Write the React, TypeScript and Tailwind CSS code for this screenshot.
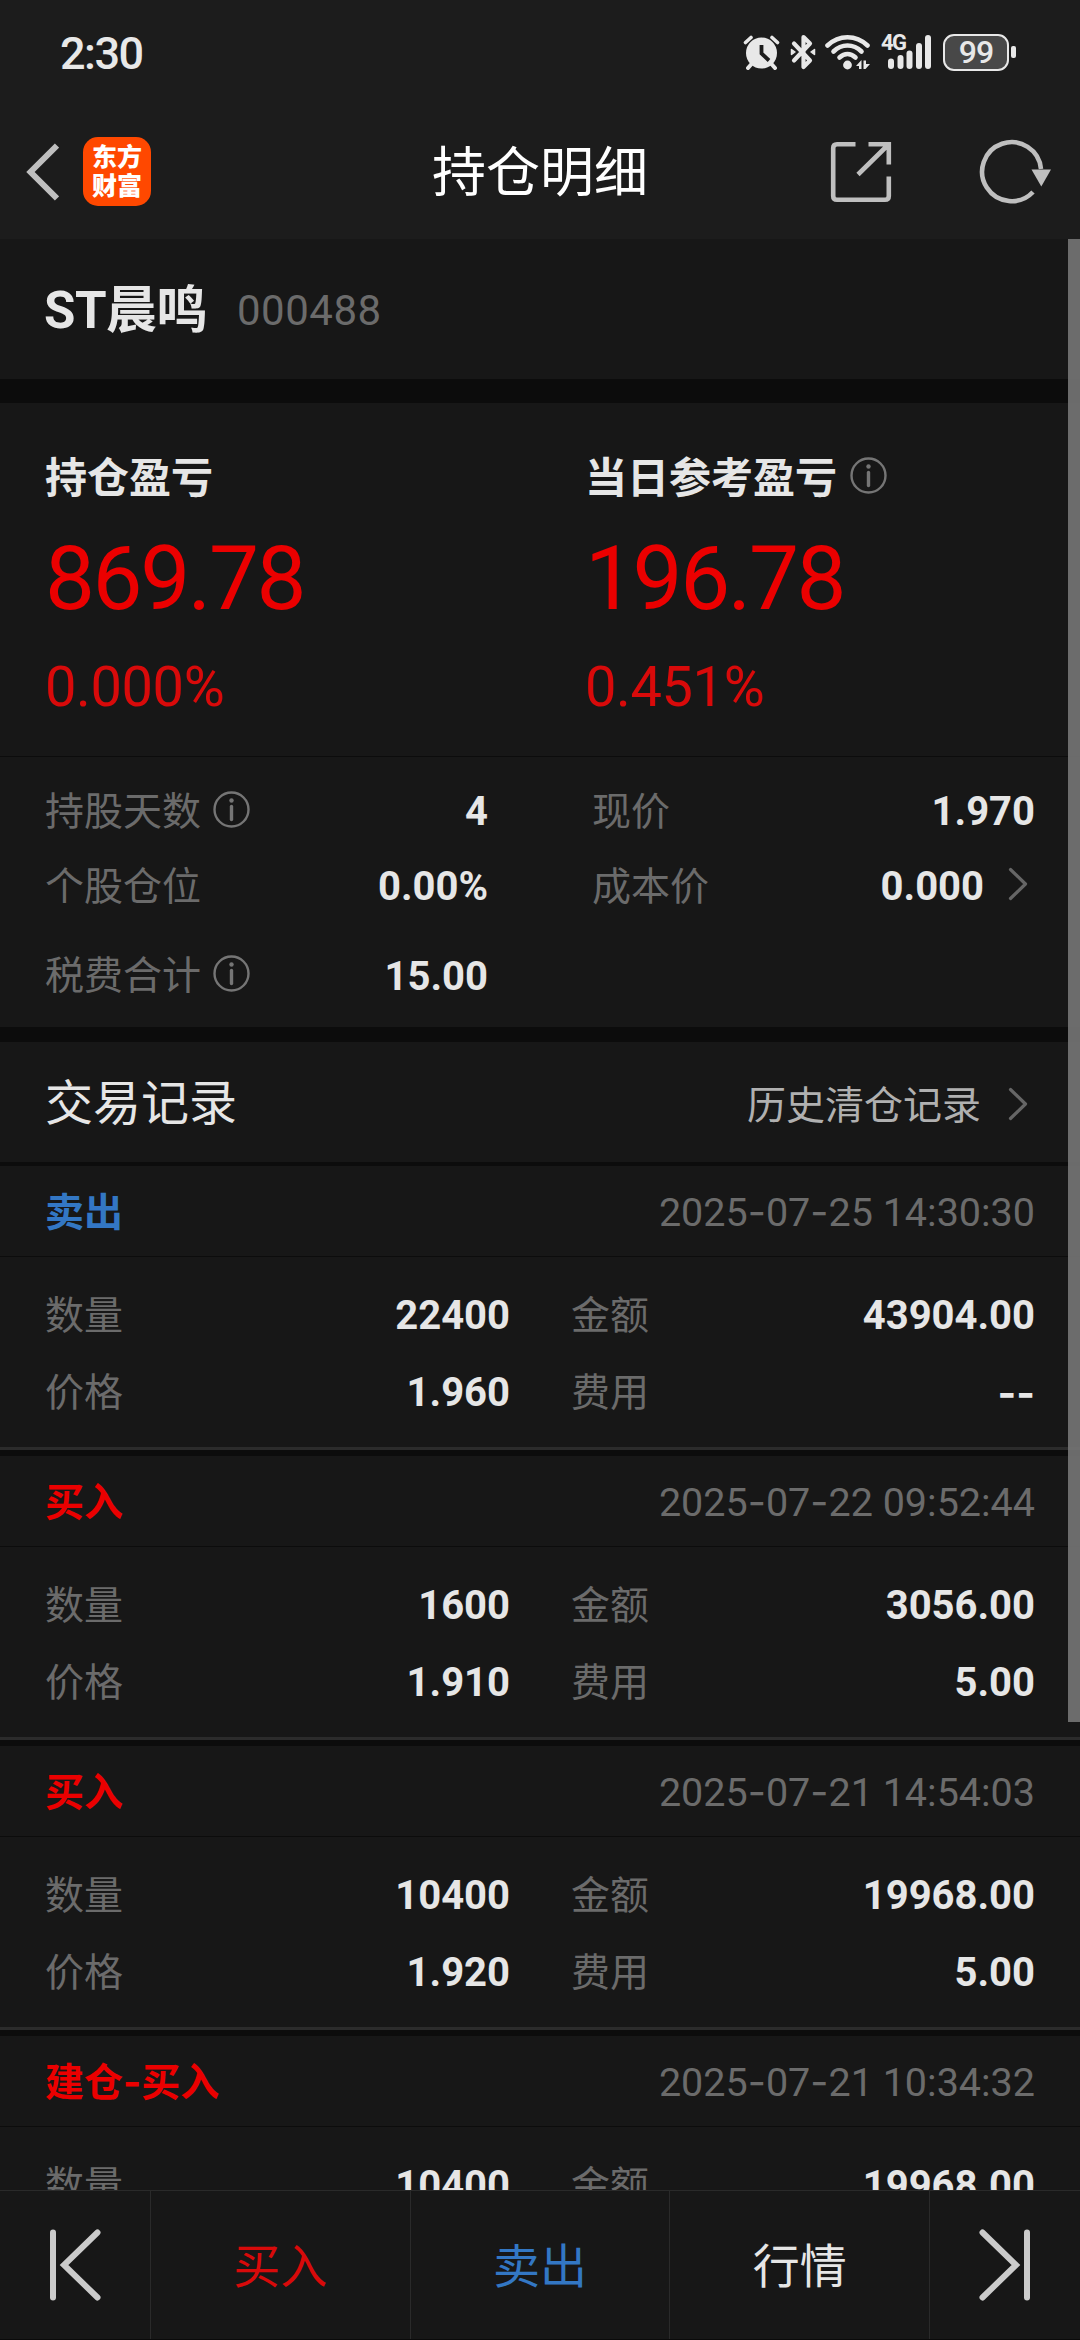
import React from "react";

type TradeRecord = {
  action: string;
  tone: string;
  time: string;
  quantity: string;
  amount: string;
  price: string;
  fee: string;
};

const BUY = "text-[#eb0000]";
const SELL = "text-[#3377c4]";

const records: TradeRecord[] = [
  { action: "卖出", tone: SELL, time: "2025-07-25 14:30:30", quantity: "22400", amount: "43904.00", price: "1.960", fee: "--" },
  { action: "买入", tone: BUY, time: "2025-07-22 09:52:44", quantity: "1600", amount: "3056.00", price: "1.910", fee: "5.00" },
  { action: "买入", tone: BUY, time: "2025-07-21 14:54:03", quantity: "10400", amount: "19968.00", price: "1.920", fee: "5.00" },
  { action: "建仓-买入", tone: BUY, time: "2025-07-21 10:34:32", quantity: "10400", amount: "19968.00", price: "1.920", fee: "5.00" },
];

/* Sets hyphens in Inter, whose dash is wider than Roboto's. */
function Dashed({ text }: { text: string }) {
  return (
    <>
      {text.split(/(-)/).map((part, i) =>
        part === "-" ? (
          <span key={i} className="font-['Inter']">-</span>
        ) : (
          part
        )
      )}
    </>
  );
}

function InfoIcon() {
  return (
    <svg className="mb-[3px] size-[37px] shrink-0" viewBox="0 0 37 37" fill="none" stroke="#757575">
      <circle cx="18.5" cy="18.5" r="17" strokeWidth="2.4" />
      <path d="M18.5 15.5v13" strokeWidth="3.4" strokeLinecap="round" />
      <circle cx="18.5" cy="9.5" r="2.2" fill="#757575" stroke="none" />
    </svg>
  );
}

function Chevron() {
  return (
    <svg className="mb-[3px] h-[34px] w-5 shrink-0" viewBox="0 0 20 34" fill="none" stroke="#666" strokeWidth="3.2" strokeLinecap="round" strokeLinejoin="round">
      <path d="M2.5 2.5L17.5 17L2.5 31.5" />
    </svg>
  );
}

function StatusBar() {
  return (
    <div className="flex h-[104px] items-center pl-[60px] pr-[64px]">
      <span className="pt-[3px] text-[45px] font-medium leading-none tracking-[-1.5px] text-[#e8e8e8]">2:30</span>
      <div className="ml-auto flex items-center text-[#e8e8e8]">
        <svg className="h-9 w-[37px]" viewBox="0 0 37 36" fill="none" stroke="currentColor" strokeLinecap="round">
          <circle cx="18.5" cy="19" r="15.5" fill="currentColor" stroke="none" />
          <path d="M2.5 8.5L8 3.5M34.5 8.5L29 3.5" strokeWidth="3.6" />
          <path d="M8.5 30L5 34M28.5 30L32 34" strokeWidth="4" />
          <path d="M18.5 11V19.5L26 26.5" stroke="#1c1c1c" strokeWidth="3.8" strokeLinecap="butt" />
        </svg>
        <svg className="ml-2.5 h-9 w-[26px]" viewBox="0 0 26 36" fill="none" stroke="currentColor" strokeWidth="4.2" strokeLinejoin="round" strokeLinecap="round">
          <path d="M4 9.5L20 26.5L13.5 33V3L20 9.5L4 26.5" />
          <path d="M1.5 15.5v5L5 18zM24.500 15.5v5L21 18z" strokeWidth="1.5" fill="currentColor" />
        </svg>
        <svg className="ml-[9px] h-9 w-[45px]" viewBox="0 0 45 36" fill="none" stroke="currentColor" strokeLinecap="round" strokeWidth="4.6">
          <path d="M2.5 11.5C14 0.5 31 0.5 42.5 11.5" />
          <path d="M8.5 17.5C16.5 9.5 28.5 9.5 36.5 17.5" />
          <path d="M14.5 23.5C19.5 19 25.5 19 30.5 23.5" />
          <circle cx="22.5" cy="31" r="4.4" fill="currentColor" stroke="none" />
          <path d="M31 32L36.5 26v9h-2.5v-3zM38.5 26.500v8.500h2L45 30H41V26.500z" fill="currentColor" stroke="none" />
        </svg>
        <div className="relative ml-[11px] h-9 w-[52px]">
          <span className="absolute left-0 top-0 text-[22px] font-bold leading-[18px] tracking-[-1.5px]">4G</span>
          <svg className="h-9 w-[52px]" viewBox="0 0 52 36" fill="currentColor">
            <rect x="7" y="24.5" width="6" height="10.5" rx="3" />
            <rect x="16.5" y="21" width="6" height="14" rx="3" />
            <rect x="25.5" y="16.5" width="6" height="18.5" rx="3" />
            <rect x="35" y="9" width="6" height="26" rx="3" />
            <rect x="44" y="1" width="6" height="34" rx="3" />
          </svg>
        </div>
        <div className="ml-2.5 flex h-[37px] w-[66px] items-center justify-center rounded-[11px] border-[2.5px] border-[#e8e8e8] bg-[#484848] text-[32px] font-medium leading-none tracking-[-1px]">
          99
        </div>
        <div className="ml-[2px] h-3 w-[5px] rounded-[2px] bg-[#e8e8e8]" />
      </div>
    </div>
  );
}

function NavBar() {
  return (
    <div className="flex h-[135px] items-center justify-between pl-[26px] pr-[29px]">
      <div className="flex w-[370px] items-center gap-6">
        <svg className="h-[58px] w-[33px]" viewBox="0 0 33 58" fill="none" stroke="#bfbfbf" strokeWidth="6">
          <path d="M31 2.5L4.5 29L31 55.5" />
        </svg>
        <div className="flex h-[69px] w-[68px] flex-col items-center justify-center rounded-[15px] bg-[#ff4800] text-[25px] font-black leading-[29px] text-white">
          <span>东方</span>
          <span>财富</span>
        </div>
      </div>
      <h1 className="pl-[3px] pt-[5px] text-[54px] leading-none text-white">持仓明细</h1>
      <div className="flex w-[370px] items-center justify-end gap-[86px]">
        <svg className="size-[62px]" viewBox="0 0 62 62" fill="none" stroke="#bfbfbf" strokeWidth="4.6">
          <path d="M25.5 3.2H7Q3.2 3.2 3.2 7V55Q3.2 58.8 7 58.8H55Q58.8 58.8 58.8 55V35.5" />
          <path d="M38.5 3.2H58.8V23.5M58 4L28 33.5" />
        </svg>
        <svg className="h-[66px] w-[73px]" viewBox="0 0 73 66" fill="none" stroke="#bfbfbf" strokeWidth="4.6">
          <path d="M55 53A29.5 29.5 0 1 1 63 30" />
          <path d="M53.5 30.5H73L63.3 47.5Z" fill="#bfbfbf" stroke="none" />
        </svg>
      </div>
    </div>
  );
}

function ProfitBlock({ title, value, percent, info }: { title: string; value: string; percent: string; info?: boolean }) {
  return (
    <div className="flex w-1/2 flex-col pl-[45px]">
      <div className="flex h-[52px] items-center gap-[13px]">
        <span className="pt-[3px] text-[42px] font-bold leading-none text-[#e6e6e6]">{title}</span>
        {info && <InfoIcon />}
      </div>
      <div className="mt-[26px] text-[89px] leading-[100px] tracking-[-2.4px] text-[#eb0000]">{value}</div>
      <div className="mt-[28px] text-[56px] leading-[60px] tracking-[-0.4px] text-[#d80a0a]">{percent}</div>
    </div>
  );
}

function Stat({ label, value, info, link, className }: { label: string; value: string; info?: boolean; link?: boolean; className: string }) {
  return (
    <div className={"flex items-center " + className}>
      <span className="pt-[3px] text-[39px] leading-none text-[#6b6b6b]">{label}</span>
      {info && (
        <span className="ml-[12px] flex">
          <InfoIcon />
        </span>
      )}
      <span className="ml-auto pt-[3px] text-[40px] font-bold leading-none text-[#e6e6e6]">{value}</span>
      {link && (
        <span className="ml-6 mr-[7px] flex">
          <Chevron />
        </span>
      )}
    </div>
  );
}

function Cell({ label, value, className }: { label: string; value: string; className: string }) {
  return (
    <div className={"flex h-[77px] items-center justify-between pt-[3px] leading-[50px] " + className}>
      <span className="text-[39px] text-[#6b6b6b]">{label}</span>
      <span className="text-[40px] font-bold text-[#e6e6e6]">
        <Dashed text={value} />
      </span>
    </div>
  );
}

function RecordCard({ record }: { record: TradeRecord }) {
  return (
    <article className="h-[290px] shrink-0 border-b-[6px] border-[#0c0c0c]">
      <div className="h-full border-b-[3px] border-[#2b2b2b]">
        <div className="flex h-[91px] items-center justify-between border-b border-[#0c0c0c] pl-[45px] pr-[45px] pt-[3px] leading-[50px]">
          <span className={"text-[39px] font-bold " + record.tone}>
            <Dashed text={record.action} />
          </span>
          <span className="text-[39.5px] text-[#6b6b6b]">
            <Dashed text={record.time} />
          </span>
        </div>
        <div className="grid grid-cols-[510px_1fr] pt-[19px]">
          <Cell className="pl-[45px]" label="数量" value={record.quantity} />
          <Cell className="pl-[61px] pr-[45px]" label="金额" value={record.amount} />
          <Cell className="pl-[45px]" label="价格" value={record.price} />
          <Cell className="pl-[61px] pr-[45px]" label="费用" value={record.fee} />
        </div>
      </div>
    </article>
  );
}

function FooterBar() {
  return (
    <footer className="flex h-[150px] shrink-0 border-y border-t-[#2a2a2a] border-b-[#0a0a0a] bg-[#171717] text-[47px] leading-none">
      <button className="flex w-[151px] items-center justify-center border-r border-[#2a2a2a]">
        <svg className="h-[72px] w-[52px]" viewBox="0 0 52 72" fill="none" stroke="#cbcbcb" strokeWidth="6" strokeLinecap="round">
          <path d="M4 3.5V68.5" />
          <path d="M48.5 3.5L15 36L48.5 68.5" />
        </svg>
      </button>
      <button className="flex-1 border-r border-[#2a2a2a] pt-[3px] text-[#d80a0a]">买入</button>
      <button className="flex-1 border-r border-[#2a2a2a] pt-[3px] text-[#3377c4]">卖出</button>
      <button className="flex-1 border-r border-[#2a2a2a] pt-[3px] text-[#e6e6e6]">行情</button>
      <button className="flex w-[150px] items-center justify-center">
        <svg className="h-[72px] w-[52px]" viewBox="0 0 52 72" fill="none" stroke="#cbcbcb" strokeWidth="6" strokeLinecap="round">
          <path d="M48 3.5V68.5" />
          <path d="M3.5 3.5L37 36L3.5 68.5" />
        </svg>
      </button>
    </footer>
  );
}

export default function App() {
  return (
    <div className="flex h-[2340px] w-[1080px] flex-col overflow-hidden bg-[#171717] font-['Roboto','Noto_Sans_CJK_SC',sans-serif]" lang="zh-CN">
      <header className="h-[239px] shrink-0 bg-[#1c1c1c]">
        <StatusBar />
        <NavBar />
      </header>

      <main className="relative flex min-h-0 flex-1 flex-col overflow-hidden">
        <section className="flex h-[164px] shrink-0 items-center border-b-[24px] border-[#0c0c0c] pl-[44px] pt-[3px]">
          <span className="text-[51px] font-bold leading-none tracking-[-0.5px] text-[#e6e6e6]">ST晨鸣</span>
          <span className="ml-[30px] text-[42px] leading-none tracking-[0.5px] text-[#6b6b6b]">000488</span>
        </section>

        <section className="flex h-[354px] shrink-0 border-b border-[#0c0c0c] pt-[48px]">
          <ProfitBlock title="持仓盈亏" value="869.78" percent="0.000%" />
          <ProfitBlock title="当日参考盈亏" value="196.78" percent="0.451%" info />
        </section>

        <section className="grid h-[285px] shrink-0 grid-cols-[488px_1fr] border-b-[15px] border-[#0c0c0c] pt-[16px]">
          <Stat className="h-[75px] pl-[45px]" label="持股天数" value="4" info />
          <Stat className="h-[75px] pl-[104px] pr-[45px]" label="现价" value="1.970" />
          <Stat className="h-[75px] pl-[45px]" label="个股仓位" value="0.00%" />
          <Stat className="h-[75px] pl-[104px] pr-[45px]" label="成本价" value="0.000" link />
          <Stat className="h-[104px] pl-[45px]" label="税费合计" value="15.00" info />
        </section>

        <section className="flex h-[124px] shrink-0 items-center border-b-4 border-[#0c0c0c] pl-[45px] pr-[52px] pt-[3px]">
          <h2 className="text-[48px] leading-none text-[#e6e6e6]">交易记录</h2>
          <span className="ml-auto mr-[27px] pt-1.5 text-[39px] leading-none text-[#b0b0b0]">历史清仓记录</span>
          <span className="flex pt-[3px]">
            <Chevron />
          </span>
        </section>

        {records.map((record) => (
          <RecordCard key={record.time} record={record} />
        ))}

        <div className="absolute right-0 top-0 h-[1483px] w-3 bg-[#757575]/90" />
      </main>

      <FooterBar />
    </div>
  );
}
